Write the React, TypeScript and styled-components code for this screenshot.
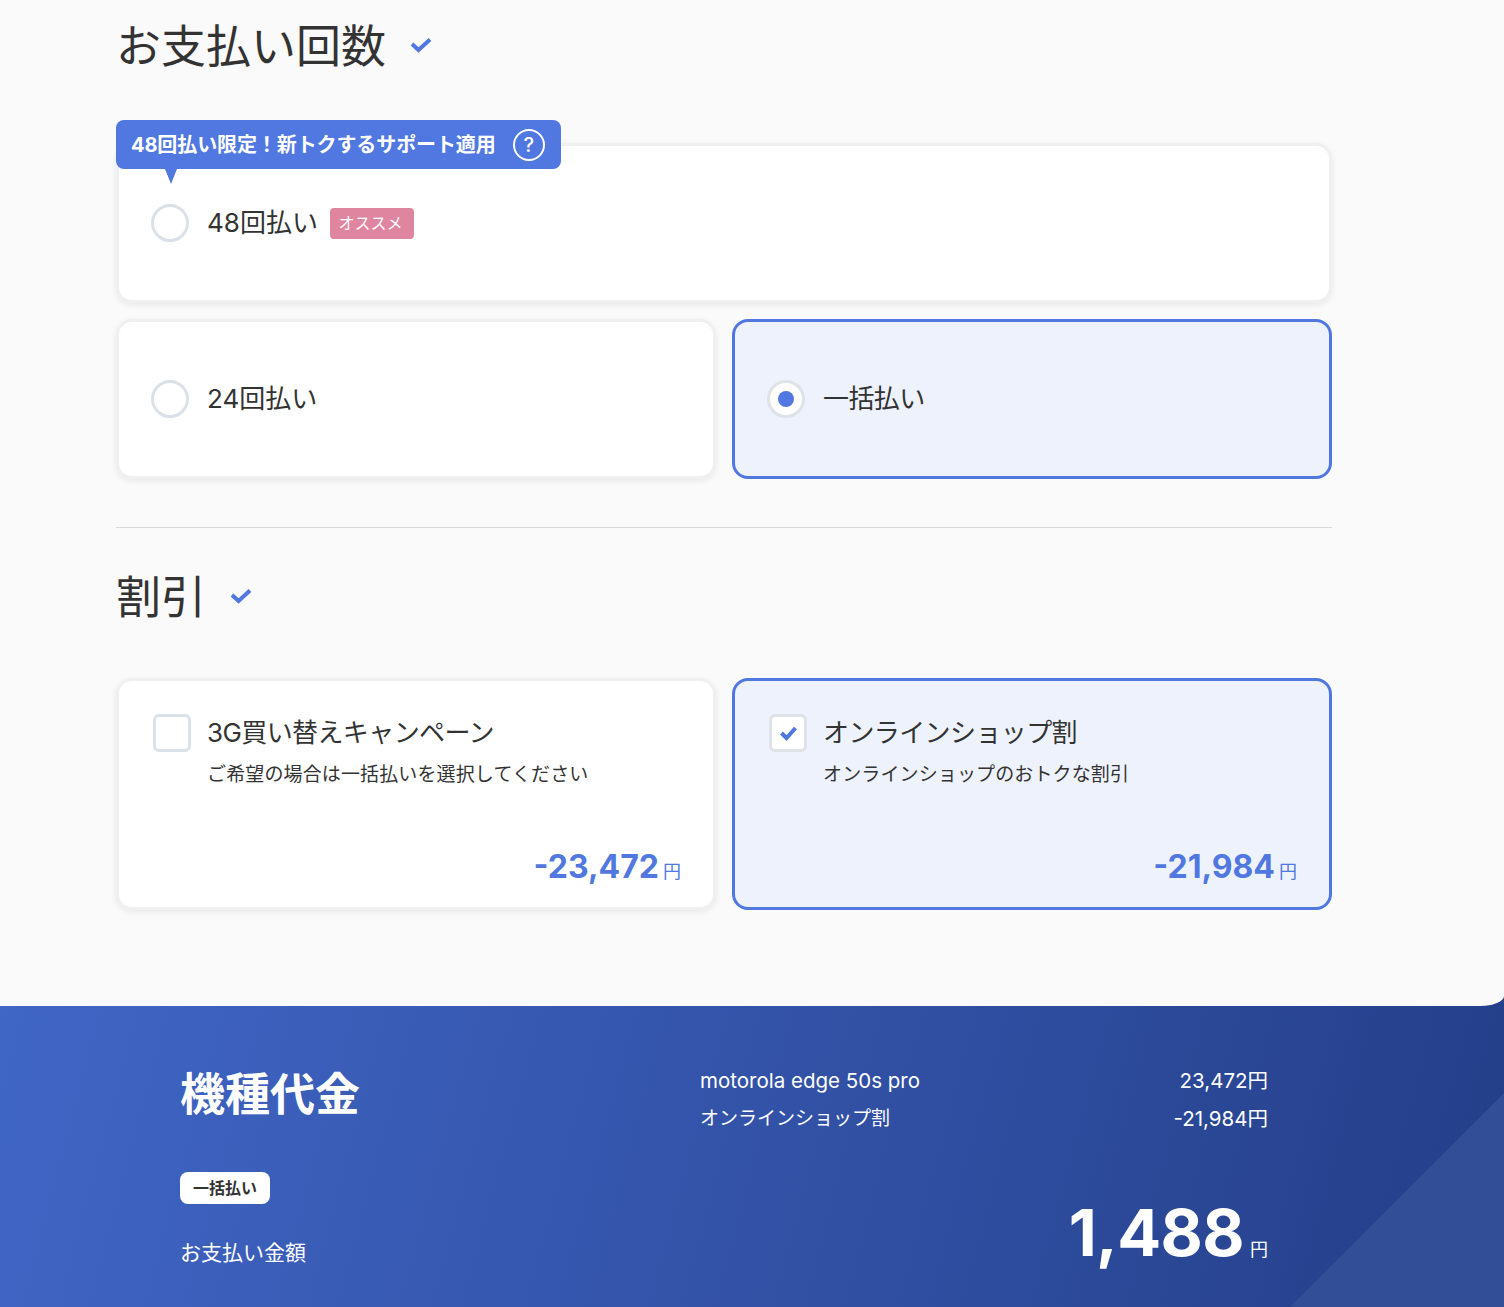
import styled, { createGlobalStyle } from 'styled-components';

const BLUE = '#5078e0';
const FONT = `Inter, 'Noto Sans CJK JP', sans-serif`;

const GlobalStyle = createGlobalStyle`
  html, body {
    margin: 0;
    padding: 0;
    height: 1307px;
    overflow: hidden;
    background: #fafafa;
    color: #333;
    font-family: ${FONT};
  }
  * { box-sizing: border-box; }
`;

function TitleCheck() {
  return (
    <TitleCheckIcon width="22" height="16" viewBox="0 0 22 16" fill="none">
      <path d="M2 7 L8.5 13 L20 2.5" stroke={BLUE} strokeWidth="4" />
    </TitleCheckIcon>
  );
}

function BoxCheck() {
  return (
    <svg width="17" height="15" viewBox="0 0 17 15" fill="none">
      <path d="M1.5 7 L6.5 12 L15.5 2" stroke={BLUE} strokeWidth="4" />
    </svg>
  );
}

export default function App() {
  return (
    <>
      <GlobalStyle />
      <Main>
        <TitleRow $gapBelow={65}>
          <Title>お支払い回数</Title>
          <TitleCheck />
        </TitleRow>

        <WideRow>
          <Card $height={160} $center>
            <Banner>
              <BannerText>48回払い限定！新トクするサポート適用</BannerText>
              <HelpCircle>?</HelpCircle>
            </Banner>
            <Radio />
            <Label $numeric>48回払い</Label>
            <Pill>オススメ</Pill>
          </Card>
        </WideRow>

        <TwoCols>
          <Card $height={160} $center>
            <Radio />
            <Label $numeric>24回払い</Label>
          </Card>
          <Card $height={160} $center $selected>
            <Radio $selected />
            <Label>一括払い</Label>
          </Card>
        </TwoCols>

        <Divider />

        <TitleRow $gapBelow={49}>
          <Title>割引</Title>
          <TitleCheck />
        </TitleRow>

        <TwoCols>
          <Card $height={232}>
            <Checkbox />
            <DiscountBody>
              <Label>3G買い替えキャンペーン</Label>
              <SubText>ご希望の場合は一括払いを選択してください</SubText>
              <Amount>
                -23,472<AmountUnit>円</AmountUnit>
              </Amount>
            </DiscountBody>
          </Card>
          <Card $height={232} $selected>
            <Checkbox $checked>
              <BoxCheck />
            </Checkbox>
            <DiscountBody>
              <Label>オンラインショップ割</Label>
              <SubText>オンラインショップのおトクな割引</SubText>
              <Amount>
                -21,984<AmountUnit>円</AmountUnit>
              </Amount>
            </DiscountBody>
          </Card>
        </TwoCols>
      </Main>

      <Footer>
        <FooterDecor />
        <FooterLeft>
          <FooterTitle>機種代金</FooterTitle>
          <Chip>一括払い</Chip>
          <PayLabel>お支払い金額</PayLabel>
        </FooterLeft>
        <FooterRight>
          <PriceRow>
            <span>motorola edge 50s pro</span>
            <span>23,472円</span>
          </PriceRow>
          <PriceRow>
            <DiscountName>オンラインショップ割</DiscountName>
            <span>-21,984円</span>
          </PriceRow>
          <Total>
            1,488<TotalUnit>円</TotalUnit>
          </Total>
        </FooterRight>
      </Footer>
    </>
  );
}

const Main = styled.main`
  position: relative;
  z-index: 1;
  height: 1006px;
  padding: 16px 172px 0 116px;
  background: #fafafa;
  border-bottom-right-radius: 24px 10px;
`;
const TitleRow = styled.div<{ $gapBelow: number }>`
  display: flex;
  align-items: center;
  gap: 24px;
  height: 62px;
  margin-bottom: ${({ $gapBelow }) => $gapBelow}px;
`;
const TitleCheckIcon = styled.svg`
  margin-bottom: 4px;
`;
const Title = styled.h2`
  margin: 0;
  font-size: 45px;
  font-weight: 400;
  line-height: 62px;
  color: #333;
`;
const WideRow = styled.div`
  margin-bottom: 16px;
`;
const TwoCols = styled.div`
  display: grid;
  grid-template-columns: 600px 600px;
  gap: 16px;
`;
const Card = styled.div<{ $height: number; $center?: boolean; $selected?: boolean }>`
  position: relative;
  display: flex;
  align-items: ${({ $center }) => ($center ? 'center' : 'flex-start')};
  height: ${({ $height }) => $height}px;
  padding: ${({ $center }) => ($center ? '0 32px' : '33px 32px 13px')};
  background: ${({ $selected }) => ($selected ? '#eef2fd' : '#fff')};
  border: 3px solid ${({ $selected }) => ($selected ? BLUE : '#f0f0f0')};
  border-radius: 16px;
  box-shadow: ${({ $selected }) => ($selected ? 'none' : '0 2px 6px rgba(0, 0, 0, 0.08)')};
`;
const Banner = styled.div`
  position: absolute;
  top: -26px;
  left: -3px;
  display: flex;
  align-items: center;
  gap: 17px;
  height: 49px;
  padding: 0 16px 0 15px;
  background: ${BLUE};
  border-radius: 8px;
  color: #fff;
  font-size: 20px;
  font-weight: 700;
  letter-spacing: -0.1px;
  white-space: nowrap;

  &::after {
    content: '';
    position: absolute;
    left: 49px;
    top: 100%;
    border-style: solid;
    border-width: 15px 6.5px 0;
    border-color: ${BLUE} transparent transparent;
  }
`;
const BannerText = styled.span`
  margin-bottom: 2px;
`;
const HelpCircle = styled.span`
  display: flex;
  align-items: center;
  justify-content: center;
  width: 32px;
  height: 32px;
  border: 2px solid #fff;
  border-radius: 50%;
  font-size: 20px;
  font-weight: 500;
`;
const Radio = styled.span<{ $selected?: boolean }>`
  display: flex;
  flex: none;
  align-items: center;
  justify-content: center;
  width: 38px;
  height: 38px;
  margin-right: 18px;
  background: #fff;
  border: 3px solid ${({ $selected }) => ($selected ? '#dfe2e6' : '#dbe1e8')};
  border-radius: 50%;

  &::after {
    content: '';
    display: ${({ $selected }) => ($selected ? 'block' : 'none')};
    width: 16px;
    height: 16px;
    background: ${BLUE};
    border-radius: 50%;
  }
`;
const Label = styled.span<{ $numeric?: boolean }>`
  font-size: 26px;
  font-weight: 400;
  letter-spacing: ${({ $numeric }) => ($numeric ? '0' : '-0.6px')};
  line-height: 38px;
  color: #333;
  white-space: nowrap;
`;
const Pill = styled.span`
  display: flex;
  align-items: center;
  justify-content: center;
  width: 84px;
  height: 31px;
  margin-left: 12px;
  padding: 0 3px 2px 0;
  background: #df85a0;
  border-radius: 4px;
  color: #fff;
  font-size: 16px;
`;
const Divider = styled.hr`
  margin: 48px 0 39px;
  border: 0;
  border-top: 1px solid #d8d8d8;
`;
const Checkbox = styled.span<{ $checked?: boolean }>`
  display: flex;
  flex: none;
  align-items: center;
  justify-content: center;
  width: 38px;
  height: 38px;
  margin: 0 16px 0 2px;
  background: #fff;
  border: 3px solid ${({ $checked }) => ($checked ? '#dfe2e6' : '#dbe1e8')};
  border-radius: 6px;
`;
const DiscountBody = styled.div`
  display: flex;
  flex: 1;
  flex-direction: column;
  height: 100%;
`;
const SubText = styled.p`
  margin: 10px 0 0;
  font-size: 19px;
  font-weight: 400;
  letter-spacing: 0.13px;
  line-height: 26px;
  color: #333;
`;
const Amount = styled.div`
  margin-top: auto;
  font-size: 32px;
  font-weight: 700;
  line-height: 44px;
  color: ${BLUE};
  text-align: right;
`;
const AmountUnit = styled.span`
  margin-left: 4px;
  font-size: 18px;
  font-weight: 400;
`;
const Footer = styled.footer`
  position: relative;
  display: grid;
  grid-template-columns: 520px 568px;
  height: 341px;
  margin-top: -40px;
  padding: 40px 0 0 180px;
  overflow: hidden;
  background: linear-gradient(105deg, #4066c6 0%, #2f4d9f 65%, #233e88 100%);
  color: #fff;
`;
const FooterDecor = styled.div`
  position: absolute;
  right: 0;
  bottom: 0;
  width: 214px;
  height: 214px;
  background: #324e96;
  clip-path: polygon(100% 0, 100% 100%, 0 100%);
`;
const FooterLeft = styled.div`
  position: relative;
  display: flex;
  flex-direction: column;
  align-items: flex-start;
  padding-top: 58px;
`;
const FooterTitle = styled.h2`
  margin: 0;
  font-size: 45px;
  font-weight: 700;
  line-height: 62px;
`;
const Chip = styled.span`
  display: flex;
  align-items: center;
  justify-content: center;
  width: 90px;
  height: 32px;
  margin-top: 46px;
  padding-bottom: 2px;
  background: #fff;
  border-radius: 8px;
  color: #333;
  font-size: 16px;
  font-weight: 700;
`;
const PayLabel = styled.span`
  margin-top: 34px;
  font-size: 21px;
  line-height: 30px;
  font-weight: 400;
`;
const FooterRight = styled.div`
  position: relative;
  display: flex;
  flex-direction: column;
  padding-top: 60px;
`;
const PriceRow = styled.div`
  display: flex;
  justify-content: space-between;
  height: 38px;
  font-size: 20.5px;
  font-weight: 400;
  line-height: 30px;
`;
const DiscountName = styled.span`
  font-size: 19px;
`;
const Total = styled.div`
  margin-top: 49px;
  font-size: 65px;
  font-weight: 700;
  letter-spacing: -0.6px;
  line-height: 84px;
  text-align: right;
`;
const TotalUnit = styled.span`
  margin-left: 6px;
  font-size: 18px;
  font-weight: 400;
  letter-spacing: 0;
`;
